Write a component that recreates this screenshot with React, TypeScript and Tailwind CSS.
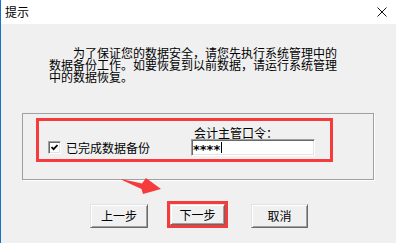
// 提示对话框 - 数据恢复前的备份确认

const bevelBtn =
  "flex items-center justify-center bg-[#f0f0f0] border border-[#e3e3e3] border-b-[#696969] border-r-[#696969] shadow-[inset_1px_1px_0_#fff,inset_-1px_-1px_0_#a0a0a0]"

const sunken =
  "bg-white border border-[#a0a0a0] border-b-white border-r-white shadow-[inset_1px_1px_0_#696969,inset_-1px_-1px_0_#e3e3e3]"

export default function App() {
  return (
    <div className="relative w-[396px] h-[243px] overflow-hidden flex flex-col bg-[#f0f0f0] border-l border-[#1c6fc9] text-[12px] text-black font-['Noto_Sans_CJK_SC','Liberation_Sans',sans-serif]">
      {/* 标题栏 */}
      <div className="h-[24px] shrink-0 bg-white flex items-center justify-between pl-[4px] pr-[9px]">
        <span className="leading-[24px]">提示</span>
        <svg width="10" height="10" viewBox="0 0 10 10" className="mt-[-1px]">
          <path d="M0.5 0.5 L9.5 9.5 M9.5 0.5 L0.5 9.5" stroke="#111" strokeWidth="1" fill="none" />
        </svg>
      </div>

      {/* 说明文字 */}
      <div className="mt-[23px] ml-[48px] h-[66px] leading-[12px]">
        <div className="pl-[24px]">为了保证您的数据安全，请您先执行系统管理中的</div>
        <div>数据备份工作。如要恢复到以前数据，请运行系统管理</div>
        <div>中的数据恢复。</div>
      </div>

      {/* 分组框 */}
      <div className="ml-[21px] w-[352px] h-[67px] border border-[#a0a0a0] shadow-[1px_1px_0_#fff]">
        <div className="ml-[13px] mt-[4px] w-[297px] h-[44px] border-[3px] border-[#f53b3b] flex items-end pl-[9px] pb-[3px]">
          <div className="w-[143px] h-[17px] flex items-center gap-[5px]">
            <div className={`w-[13px] h-[13px] flex items-center justify-center ${sunken}`}>
              <svg width="7" height="7" viewBox="0 0 7 7">
                <polyline points="0.5,3 2.6,5.2 6.5,1" stroke="#000" strokeWidth="1.8" fill="none" />
              </svg>
            </div>
            <span className="leading-[12px]">已完成数据备份</span>
          </div>
          <div className="flex flex-col">
            <span className="pl-[3px] leading-[12px]">会计主管口令：</span>
            <div className={`w-[124px] h-[17px] flex items-center pl-[1px] ${sunken}`}>
              <span className="font-['DejaVu_Sans',sans-serif] font-bold text-[13px] leading-[12px] translate-y-[2px]">****</span>
              <span className="ml-[1px] w-px h-[11px] bg-black" />
            </div>
          </div>
        </div>
      </div>

      {/* 按钮 */}
      <div className="mt-[21px] flex items-end pl-[89px]">
        <button className={`w-[58px] h-[24px] ${bevelBtn}`}>上一步</button>
        <div className="ml-[19px] w-[61px] h-[27px] border-[3px] border-[#f53b3b]">
          <button className={`w-full h-full ${bevelBtn}`}>下一步</button>
        </div>
        <button className={`ml-[23px] w-[57px] h-[24px] ${bevelBtn}`}>取消</button>
      </div>

      {/* 红色指示箭头 */}
      <svg width="42" height="18" viewBox="0 0 42 18" className="absolute left-[119px] top-[177px]">
        <polygon points="1,2 22,6.5 26,1 41,12 23,17 21.5,12 3,3.6" fill="#f53b3b" />
      </svg>
    </div>
  )
}
